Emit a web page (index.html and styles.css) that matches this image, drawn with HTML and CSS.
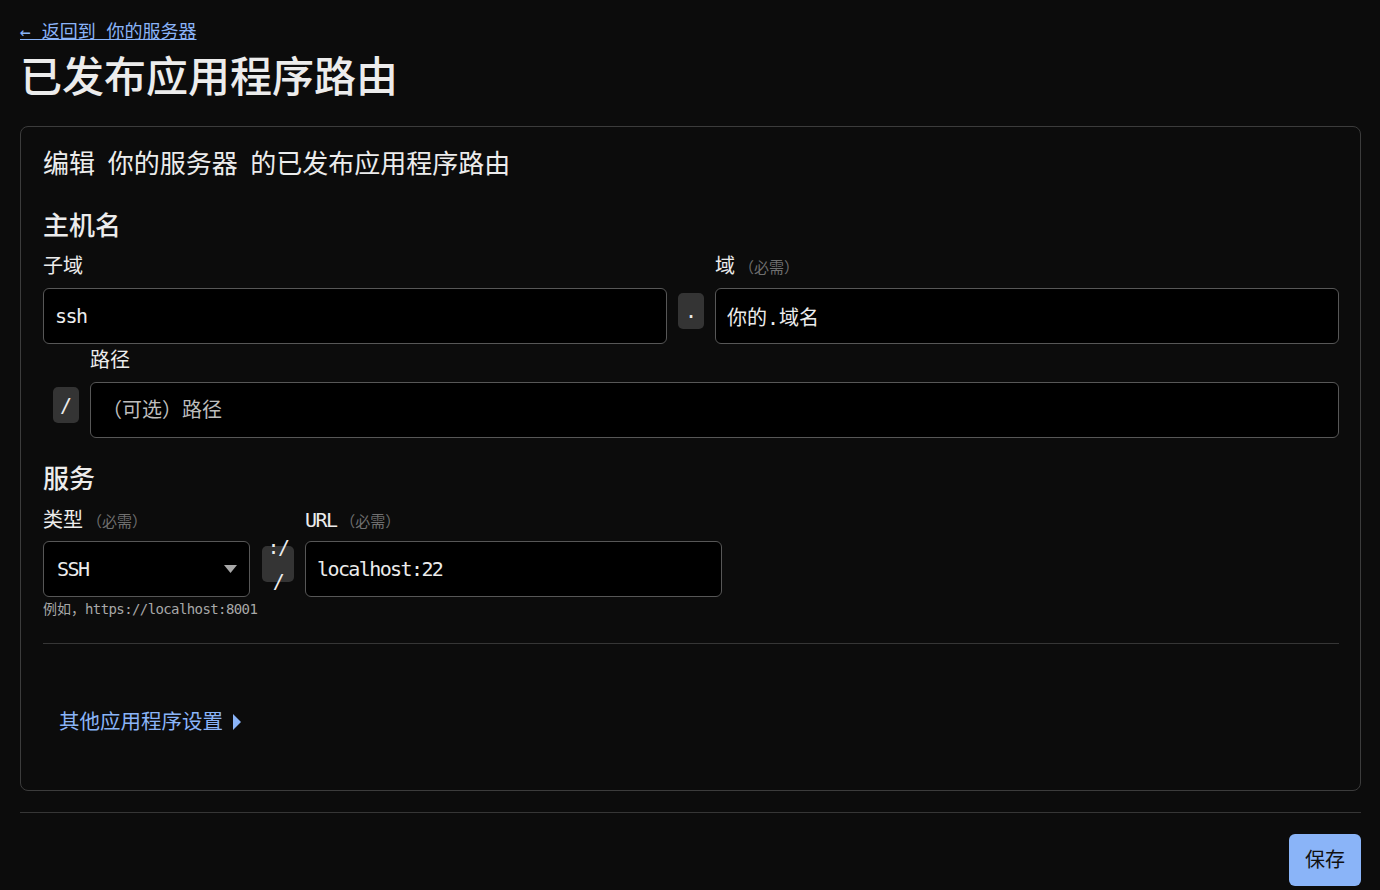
FILE: index.html
```html
<!DOCTYPE html>
<html lang="zh-CN">
<head>
  <meta charset="utf-8">
  <title>已发布应用程序路由</title>
  <link rel="stylesheet" href="styles.css">
</head>
<body>
  <div class="back-row">
    <a class="back-link" href="#">← 返回到 你的服务器</a>
  </div>
  <h1 class="page-title">已发布应用程序路由</h1>

  <form class="card">
    <h2 class="card-title">编辑 你的服务器 的已发布应用程序路由</h2>

    <h3 class="section-title">主机名</h3>
    <div class="host-grid">
      <label class="field-label" for="subdomain">子域</label>
      <span></span>
      <label class="field-label" for="domain">域<span class="required">（必需）</span></label>

      <input class="text-input mono" id="subdomain" type="text" value="ssh">
      <span class="chip">.</span>
      <input class="text-input" id="domain" type="text" value="你的.域名">
    </div>

    <div class="path-grid">
      <span></span>
      <label class="field-label" for="path">路径</label>
      <span class="chip">/</span>
      <input class="text-input" id="path" type="text" placeholder="（可选）路径">
    </div>

    <h3 class="section-title section-gap">服务</h3>
    <div class="service-grid">
      <label class="field-label" for="type">类型<span class="required">（必需）</span></label>
      <span></span>
      <label class="field-label" for="url"><span class="mono">URL</span><span class="required">（必需）</span></label>

      <div class="select-wrap">
        <select class="text-input select-input mono" id="type">
          <option>SSH</option>
          <option>HTTP</option>
          <option>HTTPS</option>
        </select>
        <svg class="select-arrow" width="13" height="8" viewBox="0 0 13 8"><path d="M0 0h13L6.5 8z" fill="#a8a8a8"/></svg>
      </div>
      <span class="chip chip-scheme">:/<br>/</span>
      <input class="text-input mono" id="url" type="text" value="localhost:22">

      <div class="hint">例如，<span class="mono">https://localhost:8001</span></div>
    </div>

    <hr class="card-rule">

    <div class="more-settings">
      <span>其他应用程序设置</span>
      <svg width="8" height="16" viewBox="0 0 8 16"><path d="M0 0l8 8-8 8z" fill="#8ab4f8"/></svg>
    </div>
  </form>

  <hr class="page-rule">

  <div class="actions">
    <button class="save-btn" type="button">保存</button>
  </div>
</body>
</html>
```

FILE: styles.css
```css
:root {
  --bg-color: #0c0c0c;
  --text-color: #ececec;
  --muted-color: #a8a8a8;
  --faint-color: #6f6f6f;
  --accent-color: #8ab4f8;
  --card-border: #3c3c3c;
  --input-border: #575757;
  --rule-color: #363636;
  --chip-color: #343434;
}

body {
  margin: 0;
  padding: 20px 19px 0 20px;
  background-color: var(--bg-color);
  color: var(--text-color);
  font-family: "DejaVu Sans Mono", "Noto Sans CJK SC", monospace;
}

.mono {
  letter-spacing: -1.6px;
}

.back-row {
  height: 24px;
  line-height: 24px;
  font-size: 18px;
}

.back-link {
  color: var(--accent-color);
}

.page-title {
  height: 48px;
  margin: 10px 0 24px 0;
  font-size: 42px;
  line-height: 48px;
  font-weight: 500;
}

.card {
  border: 1px solid var(--card-border);
  border-radius: 8px;
  padding: 20px 21px 54px 22px;
}

.card-title {
  height: 34px;
  margin: 0;
  font-size: 26px;
  line-height: 34px;
  font-weight: 400;
  word-spacing: -3px;
}

.section-title {
  height: 34px;
  margin: 28px 0 0 0;
  font-size: 26px;
  line-height: 34px;
  font-weight: 500;
}

.section-gap {
  margin-top: 24px;
}

.field-label {
  display: block;
  height: 28px;
  font-size: 20px;
  line-height: 28px;
}

.required {
  margin-left: 4px;
  font-size: 15px;
  line-height: 1;
  color: var(--faint-color);
}

.text-input {
  box-sizing: border-box;
  width: 100%;
  height: 56px;
  padding: 0 11px;
  border: 1px solid var(--input-border);
  border-radius: 6px;
  background-color: #000;
  color: var(--text-color);
  font-family: inherit;
  font-size: 20px;
  outline: none;
}

.text-input::placeholder {
  color: #bdbdbd;
}

.chip {
  align-self: start;
  box-sizing: border-box;
  height: 36px;
  margin-top: 5px;
  border-radius: 5px;
  background-color: var(--chip-color);
  font-size: 20px;
  line-height: 36px;
  text-align: center;
}

.host-grid {
  display: grid;
  grid-template-columns: 1fr 26px 1fr;
  column-gap: 11px;
  margin-top: 9px;
}

.host-grid .field-label,
.path-grid .field-label,
.service-grid .field-label {
  margin-bottom: 8px;
}

.path-grid {
  display: grid;
  grid-template-columns: 26px 1fr;
  column-gap: 11px;
  margin-top: 2px;
  padding-left: 10px;
}

.service-grid {
  display: grid;
  grid-template-columns: 207px 33px 417px;
  column-gap: 11px;
  margin-top: 10px;
}

.service-grid .field-label {
  margin-bottom: 7px;
}

.service-grid .chip {
  justify-self: end;
  width: 32px;
}

.chip-scheme {
  display: flex;
  align-items: center;
  justify-content: center;
  line-height: 34px;
  letter-spacing: -1.6px;
  white-space: nowrap;
}

.select-wrap {
  position: relative;
}

.select-input {
  appearance: none;
  -webkit-appearance: none;
  padding: 0 13px;
}

.select-arrow {
  position: absolute;
  right: 13px;
  top: 24px;
  pointer-events: none;
}

.hint {
  grid-column: 1 / 4;
  height: 18px;
  margin-top: 3px;
  font-size: 14px;
  line-height: 18px;
  color: var(--muted-color);
}

.hint .mono {
  letter-spacing: -0.6px;
}

.card-rule {
  margin: 25px 0 0 0;
  border: 0;
  border-top: 1px solid var(--rule-color);
}

.more-settings {
  display: flex;
  align-items: center;
  gap: 10px;
  height: 28px;
  margin-top: 64px;
  padding-left: 16px;
  font-size: 20.5px;
  line-height: 28px;
  color: var(--accent-color);
  cursor: pointer;
}

.page-rule {
  margin: 21px 0 0 0;
  border: 0;
  border-top: 1px solid var(--rule-color);
}

.actions {
  display: flex;
  justify-content: flex-end;
  margin-top: 21px;
}

.save-btn {
  box-sizing: border-box;
  height: 52px;
  padding: 0 16px;
  border: none;
  border-radius: 6px;
  background-color: var(--accent-color);
  color: #111;
  font-family: inherit;
  font-size: 20px;
  line-height: 28px;
  cursor: pointer;
}
```
